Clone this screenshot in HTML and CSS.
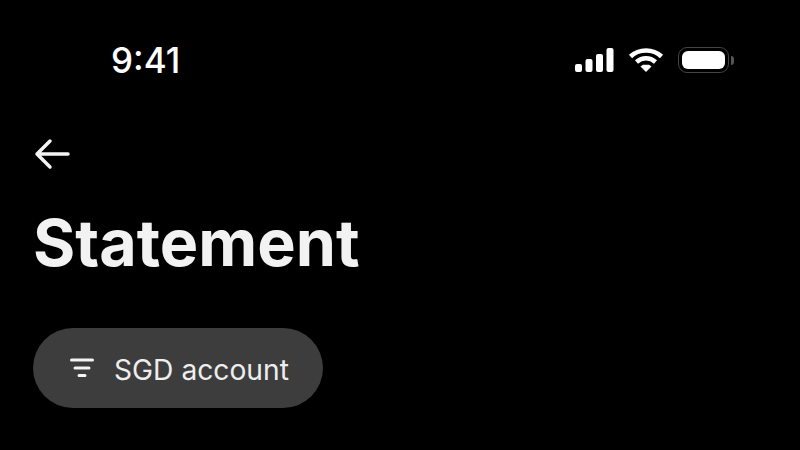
FILE: index.html
```html
<!DOCTYPE html>
<html lang="en">
<head>
  <meta charset="UTF-8" />
  <title>Statement</title>
  <link rel="stylesheet" href="styles.css">
</head>
<body>

  <div class="status-bar">
    <span class="time">9:41</span>
    <div class="status-icons">
      <svg class="signal" width="39" height="24" viewBox="0 0 39 24">
        <rect x="0" y="16" width="7" height="8" rx="2" />
        <rect x="10.5" y="11" width="7" height="13" rx="2" />
        <rect x="21" y="6" width="7" height="18" rx="2" />
        <rect x="31.5" y="0" width="7" height="24" rx="2" />
      </svg>
      <svg class="wifi" width="36" height="24" viewBox="0 0 36 24">
        <path d="M2.5 8.5 C11 0.5 25 0.5 33.5 8.5" />
        <path d="M8.5 14 C14 9 22 9 27.5 14" />
        <polygon class="wifi-dot" points="18,24 12.5,18.5 15,16.8 21,16.8 23.5,18.5" />
      </svg>
      <div class="battery">
        <div class="battery-body"><div class="battery-fill"></div></div>
        <div class="battery-cap"></div>
      </div>
    </div>
  </div>

  <div class="page">
    <svg class="back" width="38" height="32" viewBox="0 0 38 32">
      <path d="M35 16 H4 M17 3 L4 16 L17 29" />
    </svg>
    <h1>Statement</h1>
    <div class="chip">
      <svg class="filter" width="24" height="20" viewBox="0 0 24 20">
        <path d="M1.500 2 H22.500 M5 10 H19 M9 17.500 H15" />
      </svg>
      <span class="chip-label">SGD account</span>
    </div>
  </div>

</body>
</html>
```

FILE: styles.css
```css
body {
  font-family: Inter, 'Liberation Sans', sans-serif;
  margin: 0;
  width: 800px;
  height: 450px;
  overflow: hidden;
  background-color: #000;
  color: #f2f2f2;
}

.status-bar {
  display: flex;
  justify-content: space-between;
  align-items: center;
  height: 40px;
  padding: 40px 66px 0 111px;
}

.time {
  font-size: 35px;
  font-weight: 500;
  color: #fff;
}

.status-icons {
  display: flex;
  align-items: center;
  gap: 14px;
}

.signal rect {
  fill: #fff;
}

.wifi path {
  fill: none;
  stroke: #fff;
  stroke-width: 4.5;
}

.wifi-dot {
  fill: #fff;
}

.battery {
  display: flex;
  align-items: center;
  gap: 2px;
}

.battery-body {
  box-sizing: border-box;
  width: 51px;
  height: 26px;
  padding: 3px;
  border: 1px solid #444;
  border-radius: 9px;
}

.battery-fill {
  height: 100%;
  background: #fff;
  border-radius: 6px;
}

.battery-cap {
  width: 3px;
  height: 9px;
  background: #555;
  border-radius: 0 3px 3px 0;
}

.page {
  padding: 58px 33px 0;
}

.back {
  display: block;
  fill: none;
  stroke: #f4f4f4;
  stroke-width: 3.5;
  stroke-linecap: round;
  stroke-linejoin: round;
}

h1 {
  margin: 34px 0 0;
  font-size: 64.6px;
  line-height: 78px;
  font-weight: 700;
}

.chip {
  display: inline-flex;
  align-items: center;
  gap: 20px;
  height: 80px;
  margin-top: 46px;
  padding: 0 34px 0 37px;
  border-radius: 40px;
  background: #3d3d3e;
  font-size: 28.2px;
  color: #eee;
}

.chip-label {
  padding-top: 3px;
}

.filter {
  fill: none;
  stroke: #f4f4f4;
  stroke-width: 3;
  stroke-linecap: round;
}
```
